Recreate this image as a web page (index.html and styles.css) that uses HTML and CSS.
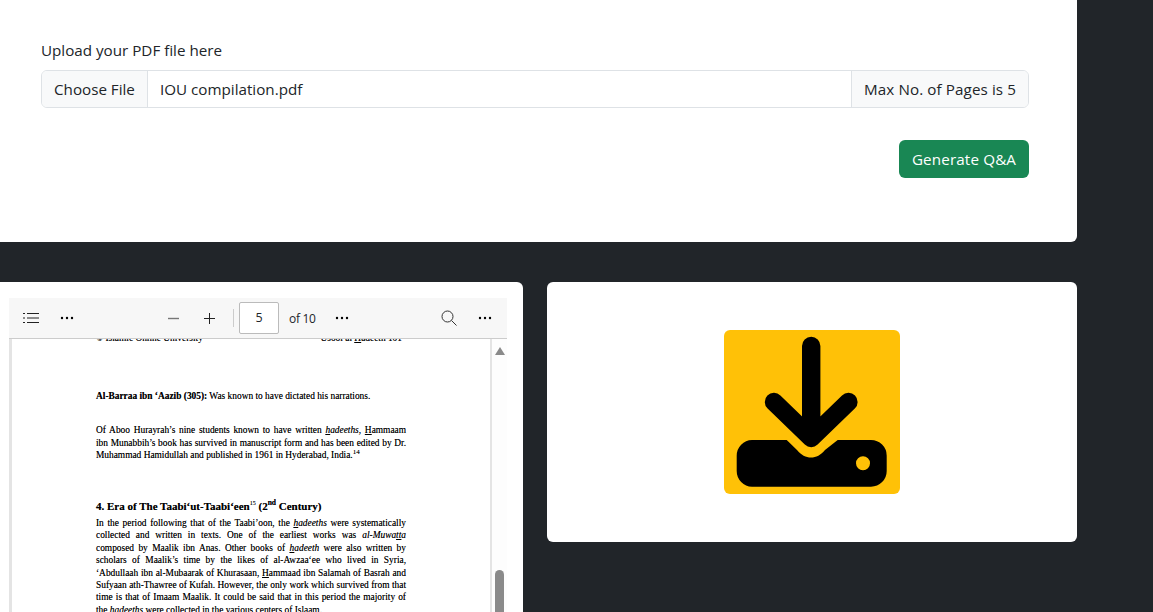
FILE: index.html
```html
<!DOCTYPE html>
<html lang="en">
<head>
<meta charset="utf-8">
<title>Generate Q&amp;A</title>
<link rel="stylesheet" href="styles.css">
</head>
<body>
<main class="page">
  <section class="card upload">
    <label class="label">Upload your PDF file here</label>
    <div class="input-group">
      <span class="addon addon-file">Choose File</span>
      <span class="file-name">IOU compilation.pdf</span>
      <span class="addon addon-note">Max No. of Pages is 5</span>
    </div>
    <div class="actions"><button class="btn">Generate Q&amp;A</button></div>
  </section>
  <div class="row">
    <section class="card viewer-card">
      <div class="viewer">
        <div class="toolbar">
          <div class="tool-group tool-left">
            <svg class="ico-list" width="16" height="10" viewBox="0 0 16 10"><path d="M0 .5h2M4 .5h12M0 5h2M4 5h12M0 9.500h2M4 9.500h12" stroke="#222" fill="none"/></svg>
            <svg class="ico-dots" width="14" height="4" viewBox="0 0 14 4"><circle cx="2" cy="2" r="1.200"/><circle cx="7" cy="2" r="1.200"/><circle cx="12" cy="2" r="1.200"/></svg>
          </div>
          <div class="tool-group tool-center">
            <svg width="11" height="11" viewBox="0 0 11 11"><path d="M0 5.500h11" stroke="#777" stroke-width="1.400" fill="none"/></svg>
            <svg class="ico-plus" width="11" height="11" viewBox="0 0 11 11"><path d="M0 5.500h11M5.500 0v11" stroke="#222" fill="none"/></svg>
            <span class="tool-sep"></span>
            <span class="page-box">5</span>
            <span class="page-of">of 10</span>
            <svg class="ico-dots" width="14" height="4" viewBox="0 0 14 4"><circle cx="2" cy="2" r="1.200"/><circle cx="7" cy="2" r="1.200"/><circle cx="12" cy="2" r="1.200"/></svg>
          </div>
          <div class="tool-group tool-right">
            <svg width="16" height="16" viewBox="0 0 16 16"><circle cx="6.500" cy="6.500" r="5.500" fill="none" stroke="#333"/><path d="M10.500 10.500l5 5" stroke="#333" fill="none"/></svg>
            <svg class="ico-dots" width="14" height="4" viewBox="0 0 14 4"><circle cx="2" cy="2" r="1.200"/><circle cx="7" cy="2" r="1.200"/><circle cx="12" cy="2" r="1.200"/></svg>
          </div>
        </div>
        <div class="doc">
          <div class="sheet">
            <div class="pdf-head"><span>© Islamic Online University</span><span>Usool al <u>H</u>adeeth 101</span></div>
            <p class="pdf-single"><b>Al-Barraa ibn ‘Aazib (305):</b> Was known to have dictated his narrations.</p>
            <p class="pdf-para">
              <span class="ln">Of Aboo Hurayrah’s nine students known to have written <i><u>h</u>adeeths</i>, <u>H</u>ammaam</span>
              <span class="ln">ibn Munabbih’s book has survived in manuscript form and has been edited by Dr.</span>
              <span class="ln end">Muhammad Hamidullah and published in 1961 in Hyderabad, India.<sup>14</sup></span>
            </p>
            <h4 class="pdf-title">4. Era of The Taabi‘ut-Taabi‘een<sup class="thin">15</sup> (2<sup>nd</sup> Century)</h4>
            <p class="pdf-para tight">
              <span class="ln">In the period following that of the Taabi’oon, the <i><u>h</u>adeeths</i> were systematically</span>
              <span class="ln">collected and written in texts. One of the earliest works was <i>al-Muwa<u>tt</u>a</i></span>
              <span class="ln">composed by Maalik ibn Anas. Other books of <i><u>h</u>adeeth</i> were also written by</span>
              <span class="ln">scholars of Maalik’s time by the likes of al-Awzaa‘ee who lived in Syria,</span>
              <span class="ln">‘Abdullaah ibn al-Mubaarak of Khurasaan, <u>H</u>ammaad ibn Salamah of Basrah and</span>
              <span class="ln">Sufyaan ath-Thawree of Kufah. However, the only work which survived from that</span>
              <span class="ln">time is that of Imaam Maalik. It could be said that in this period the majority of</span>
              <span class="ln end">the <i><u>h</u>adeeths</i> were collected in the various centers of Islaam.</span>
            </p>
          </div>
          <div class="scrollbar">
            <span class="scroll-up"></span>
            <span class="scroll-thumb"></span>
          </div>
        </div>
      </div>
    </section>
    <section class="card result-card">
      <div class="result-icon">
        <svg width="176" height="164" viewBox="0 0 176 164">
          <path d="M87.200 16v90M50 72l37.200 36L124.400 72" fill="none" stroke="#000" stroke-width="18.400" stroke-linecap="round" stroke-linejoin="round"/>
          <path fill-rule="evenodd" d="M28 110H62.700L73 120C81 130 93 130 101 120L113.700 110H147A15.700 15.700 0 0 1 162.700 125.700V141A15.700 15.700 0 0 1 147 156.700H28A15.700 15.700 0 0 1 12.700 141V125.700A15.700 15.700 0 0 1 28 110ZM139 126.300a7 7 0 1 0 .01 14a7 7 0 1 0 -.01 -14Z"/>
        </svg>
      </div>
    </section>
  </div>
</main>
</body>
</html>
```
FILE: styles.css
```css
* { box-sizing: border-box; }
html, body { margin: 0; height: 612px; overflow: hidden; }
body {
  background: #212529;
  color: #212529;
  font-family: "Open Sans", "Noto Sans", sans-serif;
  font-size: 16px;
}
.page { width: 1077px; }
.card { background: #fff; border-radius: 6px; }
.upload {
  height: 242px;
  padding: 39px 48px 0 41px;
  border-radius: 0 0 6px 0;
}
.label { display: block; height: 22px; line-height: 22px; margin-bottom: 9px; font-size: 15.2px; }
.input-group {
  display: flex;
  height: 38px;
  border: 1px solid #dee2e6;
  border-radius: 6px;
  line-height: 36px;
  font-size: 15.2px;
  overflow: hidden;
}
.addon { background: #f8f9fa; white-space: nowrap; }
.addon-file { width: 106px; padding-left: 12px; border-right: 1px solid #dee2e6; }
.file-name { flex: 1; padding-left: 12px; }
.addon-note { width: 177px; padding-left: 12px; border-left: 1px solid #dee2e6; letter-spacing: 0.1px; }
.actions { display: flex; justify-content: flex-end; margin-top: 32px; }
.btn {
  width: 130px;
  height: 38px;
  padding: 0;
  border: 0;
  border-radius: 6px;
  background: #198754;
  color: #fff;
  font: inherit;
  font-size: 15.2px;
  letter-spacing: 0.15px;
}
.row { display: grid; grid-template-columns: 523px 530px; gap: 24px; margin-top: 40px; }
.viewer-card { height: 360px; padding: 16px 16px 0 9px; border-radius: 0 6px 6px 0; }
.result-card {
  height: 260px;
  display: flex;
  align-items: center;
  justify-content: center;
}
.result-icon { width: 176px; height: 164px; background: #ffc107; border-radius: 6px; margin-left: -1px; }
.result-icon svg { display: block; }
.viewer { display: flex; flex-direction: column; height: 344px; }
.toolbar {
  flex: none;
  display: flex;
  align-items: center;
  height: 41px;
  background: #f7f7f7;
  border-bottom: 1px solid #ccc;
  padding: 0 15px 0 14px;
  font-family: "Open Sans", sans-serif;
}
.tool-group { display: flex; align-items: center; }
.tool-left { gap: 21px; }
.tool-center { gap: 0; margin-left: 94px; }
.tool-right { gap: 21px; margin-left: auto; }
.ico-plus { margin-left: 25px; }
.tool-sep { width: 1px; height: 18px; background: #ccc; margin: 0 5px 0 18px; }
.page-box {
  width: 40px;
  height: 32px;
  line-height: 30px;
  text-align: center;
  background: #fff;
  border: 1px solid #bbb;
  border-radius: 2px;
  font-size: 12.5px;
}
.page-of { font-size: 12px; margin-left: 10px; letter-spacing: -0.3px; }
.page-of + .ico-dots { margin-left: 19px; }
.doc { flex: 1; display: flex; background: #e4e4e4; padding-left: 3px; min-height: 0; }
.sheet {
  width: 478px;
  background: #fff;
  padding: 0 84px 0 84px;
  overflow: hidden;
  font-family: "Liberation Serif", serif;
  font-size: 9.4px;
  line-height: 12.43px;
  color: #000;
  text-shadow: 0 0 0.6px rgba(0, 0, 0, 0.55);
}
.pdf-head { display: flex; justify-content: space-between; padding-right: 4px; margin-top: -7px; height: 12px; }
.pdf-single { margin: 46px 0 0; }
.pdf-para { margin: 22px 0 0; }
.ln { display: block; text-align: justify; text-align-last: justify; white-space: nowrap; }
.ln.end { text-align-last: left; }
.pdf-para sup { font-size: 7px; line-height: 0; }
.pdf-title { margin: 37px 0 0; font-size: 11px; line-height: 14px; white-space: nowrap; }
.pdf-title sup { font-size: 7.5px; line-height: 0; }
.pdf-title .thin { font-weight: normal; font-size: 6px; }
.pdf-para.tight { margin-top: 4px; }
.scrollbar {
  position: relative;
  margin-left: 2px;
  width: 15px;
  background: #fdfdfd;
}
.scroll-up {
  position: absolute;
  top: 8px;
  left: 3px;
  border-left: 5px solid transparent;
  border-right: 5px solid transparent;
  border-bottom: 8px solid #8a8a8a;
}
.scroll-thumb {
  position: absolute;
  top: 231px;
  left: 3px;
  width: 9px;
  height: 60px;
  background: #8a8a8a;
  border-radius: 5px 5px 0 0;
}
```
